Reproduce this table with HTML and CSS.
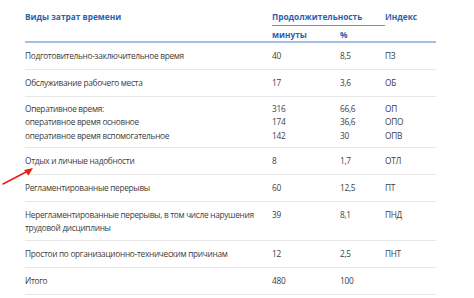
FILE: index.html
```html
<!DOCTYPE html>
<html lang="ru">
<head>
<meta charset="utf-8">
<link rel="stylesheet" href="styles.css">
</head>
<body>
<div class="page">
<table class="tbl">
  <colgroup>
    <col class="c-name"><col class="c-min"><col class="c-pct"><col class="c-idx">
  </colgroup>
  <thead>
    <tr class="h1">
      <th rowspan="2" class="top">Виды затрат времени</th>
      <th colspan="2" class="dur">Продолжительность</th>
      <th rowspan="2" class="top">Индекс</th>
    </tr>
    <tr class="h2">
      <th>минуты</th>
      <th>%</th>
    </tr>
  </thead>
  <tbody>
    <tr><td>Подготовительно-заключительное время</td><td>40</td><td>8,5</td><td>ПЗ</td></tr>
    <tr><td>Обслуживание рабочего места</td><td>17</td><td>3,6</td><td>ОБ</td></tr>
    <tr class="r3"><td>Оперативное время:<br>оперативное время основное<br>оперативное время вспомогательное</td><td>316<br>174<br>142</td><td>66,6<br>36,6<br>30</td><td>ОП<br>ОПО<br>ОПВ</td></tr>
    <tr><td>Отдых и личные надобности</td><td>8</td><td>1,7</td><td>ОТЛ</td></tr>
    <tr><td>Регламентированные перерывы</td><td>60</td><td>12,5</td><td>ПТ</td></tr>
    <tr class="r2"><td>Нерегламентированные перерывы, в том числе нарушения<br>трудовой дисциплины</td><td class="top">39</td><td class="top">8,1</td><td class="top">ПНД</td></tr>
    <tr><td>Простои по организационно-техническим причинам</td><td>12</td><td>2,5</td><td>ПНТ</td></tr>
    <tr><td>Итого</td><td>480</td><td>100</td><td></td></tr>
  </tbody>
</table>
<svg class="arrow" width="40" height="24" viewBox="0 0 40 24">
  <line x1="3" y1="21" x2="28" y2="8" stroke="#e3211c" stroke-width="1.6" stroke-linecap="round"/>
  <polygon points="33,5 24,7 28.5,12.5" fill="#e3211c"/>
</svg>
</div>
</body>
</html>
```
FILE: styles.css
```css
html, body {
  margin: 0;
  padding: 0;
  background: #ffffff;
}
.page {
  position: relative;
  width: 474px;
  height: 298px;
  overflow: hidden;
  padding-left: 25px;
  box-sizing: border-box;
  font-family: "Open Sans", "DejaVu Sans", sans-serif;
  font-size: 8.3px;
  color: #3d3d3d;
}
.tbl {
  border-collapse: collapse;
  table-layout: fixed;
  width: 411px;
}
.c-name { width: 247px; }
.c-min { width: 68px; }
.c-pct { width: 45px; }
.c-idx { width: 51px; }
th, td {
  padding: 0;
  text-align: left;
  line-height: 13.5px;
  white-space: nowrap;
}
td {
  letter-spacing: -0.3px;
}
th {
  color: #2d5fae;
  font-weight: 700;
}
thead .h1 th {
  height: 25px;
  padding-top: 10px;
  vertical-align: top;
  box-sizing: border-box;
}
thead .h1 th.dur {
  border-bottom: 1px solid #6f95d0;
}
thead .h2 th {
  height: 17px;
  padding-top: 2px;
  vertical-align: top;
  box-sizing: border-box;
}
thead tr.h2 th, thead th.top {
  border-bottom: 2px solid #a4bfe4;
}
tbody td {
  height: 26px;
  vertical-align: middle;
  border-bottom: 1px solid #e8e8e8;
}
tbody tr.r3 td { height: 50px; }
tbody tr.r2 td { height: 38px; }
tbody td.top { vertical-align: top; padding-top: 5.5px; box-sizing: border-box; }
.arrow {
  position: absolute;
  left: 0;
  top: 163px;
}
```
